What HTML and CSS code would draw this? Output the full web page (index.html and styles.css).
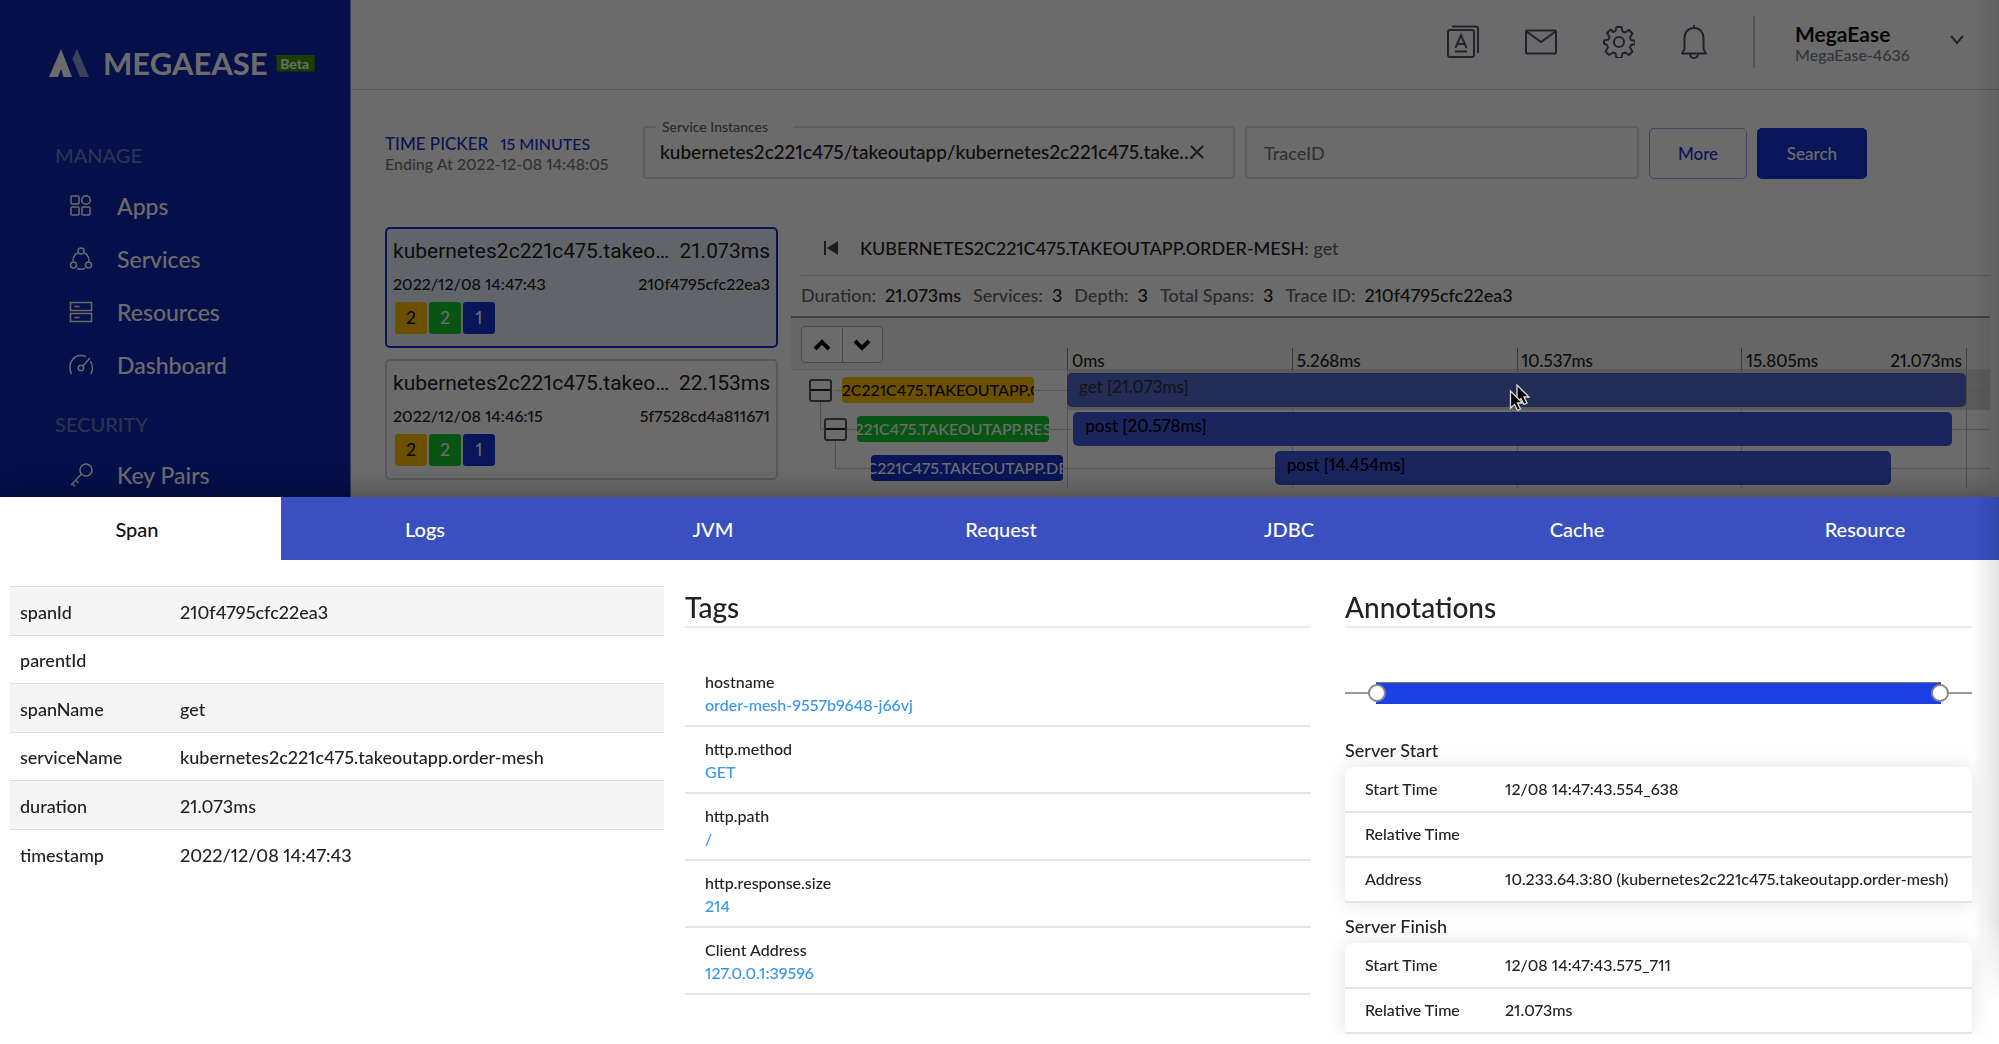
FILE: index.html
```html
<!DOCTYPE html>
<html lang="en">
<head>
<meta charset="utf-8">
<title>MegaEase - Tracing</title>
<link rel="stylesheet" href="styles.css">
</head>
<body>
<div class="app">
  <aside class="sidebar">
    <div class="brand">
      <svg class="brand-mark" width="40" height="28" viewBox="0 0 40 28"><path d="M0 28 12 0 23 28H14.500L12 20 9 28z" fill="#fff"/><path d="M23.500 10 28 0 40 28H31z" fill="#8f9ad6"/></svg>
      <span class="brand-name">MEGAEASE</span>
      <span class="beta">Beta</span>
    </div>
    <nav>
      <h2 class="nav-title">MANAGE</h2>
      <a class="nav-item" href="#apps"><svg class="icon" width="26" height="26" viewBox="0 0 26 26"><rect x="3" y="3" width="8" height="8" rx="1"/><circle cx="18" cy="7" r="4.300"/><rect x="3" y="14" width="8" height="8" rx="1"/><rect x="14" y="14" width="8" height="8" rx="1"/></svg>Apps</a>
      <a class="nav-item" href="#services"><svg class="icon" width="26" height="26" viewBox="0 0 26 26"><circle cx="13" cy="5" r="3"/><circle cx="5.500" cy="19" r="3"/><circle cx="20.500" cy="19" r="3"/><path d="M9.500 7C6.500 8.500 5 11 5 15M16.500 7C19.500 8.500 21 11 21 15M9 22.200c2.500 1.200 5.500 1.200 8 0"/></svg>Services</a>
      <a class="nav-item" href="#resources"><svg class="icon" width="26" height="26" viewBox="0 0 26 26"><rect x="2.500" y="3.500" width="21" height="8"/><rect x="2.500" y="14.500" width="21" height="8"/><path d="M6.500 7.500h5M6.500 18.500h5"/></svg>Resources</a>
      <a class="nav-item" href="#dashboard"><svg class="icon" width="26" height="26" viewBox="0 0 26 26"><path d="M3.500 22C-1 12 5 3.500 13 3.500c2 0 3.500.4 5 1M22.500 9c2.500 4.500 2.500 9 .5 13M15 14l7-8"/><circle cx="13" cy="16" r="2.700"/></svg>Dashboard</a>
      <h2 class="nav-title nav-title-next">SECURITY</h2>
      <a class="nav-item" href="#keys"><svg class="icon" width="26" height="26" viewBox="0 0 26 26"><circle cx="18" cy="8" r="6"/><path d="M13.500 12 3 23M4 21.500l3 3M7.500 18l3 3"/></svg>Key Pairs</a>
    </nav>
  </aside>

  <div class="main">
    <header class="topbar">
      <button class="icon-btn" aria-label="Language"><svg class="icon" width="32" height="34" viewBox="0 0 32 34"><rect x="1" y="5" width="26" height="27" rx="2"/><path d="M5 1.500h24q2 0 2 2V28M8.500 23 14 10l5.500 13M10.500 19h7M8 26.500h12"/></svg></button>
      <button class="icon-btn" aria-label="Messages"><svg class="icon" width="32" height="26" viewBox="0 0 32 26"><rect x="1" y="1.500" width="30" height="23" rx="1"/><path d="M1.500 2.500 16 13 30.500 2.500"/></svg></button>
      <button class="icon-btn" aria-label="Settings"><svg class="icon" width="32" height="32" viewBox="0 0 32 32"><circle cx="16" cy="16" r="5"/><path d="M13.500 1h5l1 4.500 2.500 1 3.900-2.500 3.500 3.500-2.400 4 1 2.500 4.500 1v3l-4.500 1-1 2.500 2.400 4-3.500 3.500-3.900-2.500-2.500 1-1 4.500h-5l-1-4.500-2.500-1-3.900 2.500-3.500-3.500 2.400-4-1-2.500L1 17.500v-3l4.500-1 1-2.500-2.400-4L7.600 3.500 10 6l2.500-1z" stroke-linejoin="round"/></svg></button>
      <button class="icon-btn" aria-label="Notifications"><svg class="icon" width="26" height="34" viewBox="1 0 26 34"><path d="M14 0v3M14 3C8 3 4.500 7.500 4.500 13v11L2 28.500h24L23.500 24V13C23.500 7.500 20 3 14 3zM10 29c.5 5.300 7.500 5.300 8 0" stroke-linejoin="round"/></svg></button>
      <button class="account">
        <span class="account-text"><strong>MegaEase</strong><small>MegaEase-4636</small></span>
        <svg class="icon" width="16" height="12" viewBox="0 0 16 12"><path d="M2 2l6 7 6-7"/></svg>
      </button>
    </header>

    <main class="content">
      <form class="filters" onsubmit="return false">
        <div class="time">
          <button type="button" class="time-btn"><span>TIME PICKER</span><span class="time-range">15 MINUTES</span></button>
          <span class="time-end">Ending At 2022-12-08 14:48:05</span>
        </div>
        <fieldset class="instances">
          <legend><label for="instances">Service Instances</label></legend>
          <div class="instances-row">
            <input id="instances" type="text" value="kubernetes2c221c475/takeoutapp/kubernetes2c221c475.takeoutapp.order-mesh">
            <button type="button" class="clear" aria-label="Clear"><svg width="14" height="14" viewBox="0 0 14 14"><path d="M1 1l12 12M13 1L1 13"/></svg></button>
          </div>
        </fieldset>
        <input class="trace-id" type="text" placeholder="TraceID" aria-label="TraceID">
        <button type="button" class="btn btn-outline">More</button>
        <button type="submit" class="btn btn-solid">Search</button>
      </form>

      <div class="columns">
        <div class="traces">
          <button class="trace trace-active">
            <span class="trace-head"><span class="trace-name">kubernetes2c221c475.takeoutapp.order-mesh</span><span>21.073ms</span></span>
            <span class="trace-meta"><span>2022/12/08 14:47:43</span><span>210f4795cfc22ea3</span></span>
            <span class="badges"><span class="badge yellow">2</span><span class="badge green">2</span><span class="badge blue">1</span></span>
          </button>
          <button class="trace">
            <span class="trace-head"><span class="trace-name">kubernetes2c221c475.takeoutapp.order-mesh</span><span>22.153ms</span></span>
            <span class="trace-meta"><span>2022/12/08 14:46:15</span><span>5f7528cd4a811671</span></span>
            <span class="badges"><span class="badge yellow">2</span><span class="badge green">2</span><span class="badge blue">1</span></span>
          </button>
        </div>

        <section class="detail">
          <div class="detail-title">
            <button class="back" aria-label="Hide list"><svg width="16" height="16" viewBox="0 0 16 16"><path d="M1 1h2v14H1zM15 1v14L4 8z"/></svg></button>
            <h1>KUBERNETES2C221C475.TAKEOUTAPP.ORDER-MESH<span>: get</span></h1>
          </div>
          <dl class="stats">
            <div><dt>Duration:</dt><dd>21.073ms</dd></div>
            <div><dt>Services:</dt><dd>3</dd></div>
            <div><dt>Depth:</dt><dd>3</dd></div>
            <div><dt>Total Spans:</dt><dd>3</dd></div>
            <div><dt>Trace ID:</dt><dd>210f4795cfc22ea3</dd></div>
          </dl>
          <div class="scale">
            <div class="expand">
              <button aria-label="Collapse all"><svg width="18" height="12" viewBox="0 0 18 12"><path d="M2 10l7-7 7 7"/></svg></button>
              <button aria-label="Expand all"><svg width="18" height="12" viewBox="0 0 18 12"><path d="M2 2l7 7 7-7"/></svg></button>
            </div>
            <div class="ticks"><span>0ms</span><span>5.268ms</span><span>10.537ms</span><span class="last"><span>15.805ms</span><span>21.073ms</span></span></div>
          </div>
          <div class="span-row span-hover">
            <div class="tree level-1"><button class="toggle" aria-label="Collapse"></button><span class="service yellow"><span>S2C221C475.TAKEOUTAPP.O</span></span></div>
            <div class="track"><div class="bars"><div class="bar" style="margin-left:0%;width:100%">get [21.073ms]</div></div></div>
          </div>
          <div class="span-row">
            <div class="tree level-2"><button class="toggle" aria-label="Collapse"></button><span class="service green"><span>221C475.TAKEOUTAPP.RES</span></span></div>
            <div class="track"><div class="bars"><div class="bar" style="margin-left:0.7%;width:97.7%">post [20.578ms]</div></div></div>
          </div>
          <div class="span-row">
            <div class="tree level-3"><span class="service blue"><span>C221C475.TAKEOUTAPP.DE</span></span></div>
            <div class="track"><div class="bars"><div class="bar" style="margin-left:23.1%;width:68.6%">post [14.454ms]</div></div></div>
          </div>
        </section>
      </div>
    </main>
  </div>
</div>

<div class="backdrop"></div>
<svg class="pointer" width="22" height="32" viewBox="0 0 22 32"><g fill="#000" stroke="#ddd" stroke-width="1.300"><path d="M8 2v17l4-3.500 3 6 3-1.500-3-6h5z"/><path d="M1.500 8v17l4-3.500 3 6 3-1.500-3-6h5z"/></g></svg>

<section class="drawer" role="dialog" aria-label="Span detail">
  <div class="tabs" role="tablist">
    <button class="tab tab-active" role="tab" aria-selected="true">Span</button>
    <button class="tab" role="tab">Logs</button>
    <button class="tab" role="tab">JVM</button>
    <button class="tab" role="tab">Request</button>
    <button class="tab" role="tab">JDBC</button>
    <button class="tab" role="tab">Cache</button>
    <button class="tab" role="tab">Resource</button>
  </div>
  <div class="drawer-body">
    <table class="props">
      <tbody>
        <tr><th scope="row">spanId</th><td>210f4795cfc22ea3</td></tr>
        <tr><th scope="row">parentId</th><td></td></tr>
        <tr><th scope="row">spanName</th><td>get</td></tr>
        <tr><th scope="row">serviceName</th><td>kubernetes2c221c475.takeoutapp.order-mesh</td></tr>
        <tr><th scope="row">duration</th><td>21.073ms</td></tr>
        <tr><th scope="row">timestamp</th><td>2022/12/08 14:47:43</td></tr>
      </tbody>
    </table>
    <section>
      <h2 class="panel-title">Tags</h2>
      <dl class="tags">
        <div><dt>hostname</dt><dd>order-mesh-9557b9648-j66vj</dd></div>
        <div><dt>http.method</dt><dd>GET</dd></div>
        <div><dt>http.path</dt><dd>/</dd></div>
        <div><dt>http.response.size</dt><dd>214</dd></div>
        <div><dt>Client Address</dt><dd>127.0.0.1:39596</dd></div>
      </dl>
    </section>
    <section class="annotations">
      <h2 class="panel-title">Annotations</h2>
      <div class="range">
        <div class="range-fill"></div>
        <input type="range" aria-label="Start" min="0" max="100" step="any" value="3.7">
        <input type="range" aria-label="Finish" min="0" max="100" step="any" value="96.3">
      </div>
      <h3 class="event-title">Server Start</h3>
      <table class="event">
        <tbody>
          <tr><th scope="row">Start Time</th><td>12/08 14:47:43.554_638</td></tr>
          <tr><th scope="row">Relative Time</th><td></td></tr>
          <tr><th scope="row">Address</th><td>10.233.64.3:80 (kubernetes2c221c475.takeoutapp.order-mesh)</td></tr>
        </tbody>
      </table>
      <h3 class="event-title">Server Finish</h3>
      <table class="event">
        <tbody>
          <tr><th scope="row">Start Time</th><td>12/08 14:47:43.575_711</td></tr>
          <tr><th scope="row">Relative Time</th><td>21.073ms</td></tr>
        </tbody>
      </table>
    </section>
  </div>
</section>
<div class="edge-shade"></div>
</body>
</html>
```
FILE: styles.css
```css
* { box-sizing: border-box; }

body {
  margin: 0;
  height: 100vh;
  overflow: hidden;
  font-family: Lato, "Liberation Sans", sans-serif;
  font-variant-numeric: proportional-nums;
  font-weight: 500;
  font-size: 18px;
  color: #222;
  background: #fff;
}

button, input { font: inherit; font-variant-numeric: inherit; color: inherit; }
button { padding: 0; border: 0; background: none; cursor: pointer; }
h1, h2, h3, dl, dd { margin: 0; }
h1, h2, h3 { font-weight: 500; }

.icon { fill: none; stroke: currentColor; stroke-width: 2; flex: none; }

.app { display: flex; min-height: 100vh; isolation: isolate; }

/* Sidebar */
.sidebar {
  flex: none;
  width: 351px;
  padding: 44px 0 0 49px;
  color: #fff;
  background: #0e24b0;
  border-right: 1px solid #7a85c8;
}
.brand { display: flex; align-items: center; height: 38px; }
.brand-name { margin-left: 14px; font-size: 31px; line-height: 38px; font-weight: 700; }
.beta {
  margin-left: 7px;
  width: 40px;
  font-size: 14px;
  line-height: 17px;
  font-weight: 700;
  text-align: center;
  background: #3a9400;
  clip-path: polygon(0 0, 100% 0, 100% 100%, 5% 100%, 5% 20%);
}
.nav-title { margin: 59px 0 10px 6px; font-size: 20px; line-height: 28px; color: #6a77c4; }
.nav-title.nav-title-next { margin-top: 19px; }
.nav-item {
  display: flex;
  align-items: center;
  gap: 23px;
  height: 53px;
  padding-left: 19px;
  font-size: 23px;
  color: #fff;
  text-decoration: none;
}
.nav-item .icon { stroke-width: 1.5; }

/* Header */
.main { flex: 1; min-width: 0; }
.topbar {
  display: flex;
  align-items: center;
  justify-content: flex-end;
  height: 90px;
  padding: 0 34px 5px 0;
  gap: 46px;
  color: #4a5568;
  border-bottom: 1px solid #d5d5d5;
}
.icon-btn { display: flex; }
.account {
  display: flex;
  align-items: flex-start;
  justify-content: space-between;
  width: 212px;
  height: 52px;
  padding: 6px 0 0 40px;
  text-align: left;
  border-left: 2px solid #ccc;
}
.account .icon { margin-top: 12px; }
.account-text { display: flex; flex-direction: column; }
.account strong { font-size: 21px; line-height: 24px; color: #111; }
.account small { font-size: 16px; line-height: 18px; color: #7a7f8c; }

/* Filters */
.content { padding: 29px 9px 0 34px; }
.filters {
  display: grid;
  grid-template-columns: 248px minmax(0, 592fr) minmax(0, 394fr) 98px 110px;
  column-gap: 10px;
  align-items: start;
  padding-right: 123px;
}
.time { padding-top: 15px; white-space: nowrap; }
.time-btn { display: flex; gap: 12px; color: #1733c9; font-size: 17px; line-height: 20px; }
.time-range { font-size: 16px; }
.time-end { display: block; color: #777; font-size: 16px; line-height: 20px; }
.instances {
  min-width: 0;
  height: 60px;
  margin: 0;
  padding: 0 29px 0 15px;
  border: 2px solid #ddd;
  border-radius: 4px;
}
.instances legend { margin-left: -4px; padding: 0 25px 0 6px; font-size: 14px; line-height: 16px; color: #666; }
.instances-row { display: flex; align-items: center; height: 34px; }
.instances input { flex: 1; min-width: 0; padding: 0; border: 0; outline: 0; background: none; text-overflow: ellipsis; font-size: 19px; line-height: 24px; }
.clear { display: flex; flex: none; margin-left: -8px; }
.clear svg { fill: none; stroke: #444; stroke-width: 2; }
.trace-id {
  min-width: 0;
  width: 100%;
  height: 53px;
  margin-top: 7px;
  padding: 0 17px;
  border: 2px solid #ddd;
  border-radius: 4px;
  background: none;
}
.trace-id::placeholder { color: #777; opacity: 1; }
.btn { height: 51px; margin-top: 9px; border-radius: 5px; font-size: 17px; }
.btn-outline { color: #1733c9; border: 1px solid #98a4e8; }
.btn-solid { color: #fff; background: #1432d2; }

/* Trace list */
.columns { display: grid; grid-template-columns: 393px 1fr; gap: 13px; margin-top: 31px; }
.traces { display: flex; flex-direction: column; gap: 11px; padding-top: 17px; }
.trace {
  display: flex;
  flex-direction: column;
  height: 121px;
  padding: 8px 6px;
  text-align: left;
  border: 2px solid #d2d2d2;
  border-radius: 5px;
}
.trace-active { background: #e8f0fa; border-color: #1432c8; }
.trace-head { display: flex; width: 100%; font-family: Roboto, sans-serif; font-size: 21px; font-weight: 400; line-height: 28px; }
.trace-name { flex: 1; min-width: 0; overflow: hidden; white-space: nowrap; text-overflow: ellipsis; }
.trace-meta { display: flex; justify-content: space-between; width: 100%; margin-top: 9px; font-size: 16px; line-height: 20px; }
.badges { display: flex; gap: 2px; margin: 8px 0 0 2px; }
.badge { width: 32px; line-height: 32px; font-size: 17px; text-align: center; border-radius: 3px; }
.yellow { color: #111; background: #ffbe00; }
.green { color: #fff; background: #14c82c; }
.blue { color: #fff; background: #1432d2; }

/* Trace detail */
.detail { min-width: 0; }
.detail-title {
  display: flex;
  align-items: center;
  gap: 21px;
  height: 66px;
  margin-left: 10px;
  padding: 11px 0 0 22px;
  border-bottom: 1px solid #d5d5d5;
}
.detail h1 { font-size: 18px; line-height: 24px; color: #222; }
.detail h1 span { color: #666; }
.back { display: flex; }
.back svg { fill: #444; }
.stats { display: flex; gap: 12px; height: 40px; padding-left: 10px; font-size: 18px; line-height: 38px; }
.stats div { display: flex; gap: 9px; }
.stats dt { color: #666; }
.scale {
  display: grid;
  grid-template-columns: 276px 1fr;
  height: 54px;
  padding-right: 23px;
  background: #f4f4f4;
  border-top: 2px solid #999;
  border-bottom: 1px solid #ddd;
}
.expand { display: flex; width: 82px; height: 37px; margin: 8px 0 0 10px; border: 1px solid #b0b0b0; border-radius: 4px; background: #fff; }
.expand button { display: flex; align-items: center; justify-content: center; flex: 1; }
.expand button + button { border-left: 1px solid #b0b0b0; }
.expand svg { fill: none; stroke: #111; stroke-width: 4; }
.ticks { display: grid; grid-template-columns: repeat(4, 1fr); align-self: end; height: 21px; font-size: 17px; line-height: 25px; border-right: 1px solid #999; }
.ticks > span { padding: 0 4px; border-left: 1px solid #888; }
.ticks .last { display: flex; justify-content: space-between; }

.span-row { display: grid; grid-template-columns: 276px 1fr; height: 39px; }
.tree { display: flex; align-items: center; gap: 10px; position: relative; }
.level-1 { padding-left: 18px; }
.level-2 { padding-left: 33px; }
.level-3 { padding-left: 80px; }
.tree::before { content: ""; position: absolute; left: 44px; right: 0; top: 50%; border-top: 1px solid #ccc; }
.level-2::before { left: 29px; }
.level-2::after, .level-3::after { content: ""; position: absolute; left: 29px; top: -8px; height: 28px; border-left: 1px solid #bbb; }
.level-3::after { left: 44px; }
.toggle { position: relative; z-index: 1; flex: none; width: 23px; height: 23px; border: 2px solid #555; border-radius: 3px; background: linear-gradient(#222, #222) center / 100% 2px no-repeat #fff; }
.service {
  position: relative;
  z-index: 1;
  display: flex;
  flex: none;
  justify-content: center;
  width: 192px;
  overflow: hidden;
  font-size: 16px;
  line-height: 26px;
  white-space: nowrap;
  border-radius: 4px;
}
.service > span { flex: none; }
.track { padding-right: 23px; background: linear-gradient(#ccc, #ccc) center / 100% 1px no-repeat; }
.bars {
  height: 100%;
  padding: 3px 0;
  border-right: 1px solid #b5b5b5;
  background: repeating-linear-gradient(90deg, #c4c4c4 0 1px, transparent 1px 25%);
}
.bar { height: 34px; padding-left: 12px; font-size: 17px; line-height: 28px; color: #000; background: #3e58e0; border-radius: 5px; }
.span-hover .track { background-color: #dadada; }
.span-hover .bar { background: #5469cf; color: #333; }

/* Overlays */
.backdrop { position: fixed; inset: 0; background: rgba(0, 0, 0, .58); }
.pointer { position: fixed; left: 1509px; top: 383px; }
.edge-shade {
  position: fixed;
  top: 0;
  right: 0;
  bottom: 0;
  width: 26px;
  background: linear-gradient(90deg, transparent, rgba(0, 0, 0, .1));
  mask-image: linear-gradient(#000 88%, transparent 96%);
  pointer-events: none;
}

/* Drawer */
.drawer {
  position: fixed;
  left: 0;
  right: 0;
  bottom: 0;
  height: 52.4vh;
  display: flex;
  flex-direction: column;
  padding-bottom: 10px;
  background: #fefefe;
  box-shadow: 0 -4px 24px rgba(0, 0, 0, .3);
}
.tabs { display: flex; flex: none; height: 63px; margin: 0 -10px 0 -7px; }
.tab { flex: 1; padding-top: 2px; font-size: 20px; line-height: 24px; color: #fff; background: #3a50c0; }
.tab-active { color: #111; background: #fefefe; }
.drawer-body {
  flex: 1;
  min-height: 0;
  overflow: hidden;
  display: grid;
  grid-template-columns: 654fr 626fr 640fr;
  column-gap: 21px;
  align-items: start;
  padding: 26px 27px 0 10px;
}
.drawer-body > * { min-width: 0; }
.annotations { padding-left: 13px; }
table { border-collapse: collapse; table-layout: fixed; width: 100%; }
th { text-align: left; font-weight: 500; }
.props th { width: 160px; }
.props th, .props td { height: 48px; padding: 2px 10px 0; line-height: 22px; border-top: 1px solid #ddd; }
.props tr:nth-child(odd) { background: #f5f5f5; }
.props tr:nth-child(odd) > * { height: 49px; }
.panel-title { height: 42px; font-size: 28px; line-height: 42px; border-bottom: 2px solid #eaeaea; }
.tags { padding-top: 32px; font-size: 16px; line-height: 23px; }
.tags > div { height: 67px; padding: 10px 20px 0; border-bottom: 2px solid #e4e4e4; }
.tags dd { color: #3896f0; }
.range { position: relative; height: 22px; margin-top: 54px; background: linear-gradient(#999, #999) center / 100% 2px no-repeat; }
.range-fill { height: 100%; margin: 0 5%; background: #1c3fe3; border-top: 1px solid #777; }
.range input { position: absolute; left: 0; top: 0; width: 100%; height: 22px; margin: 0; appearance: none; background: none; pointer-events: none; }
.range input::-webkit-slider-thumb { appearance: none; width: 18px; height: 18px; border: 2px solid #888; border-radius: 50%; background: #fff; pointer-events: auto; }
.event-title { height: 34px; margin-top: 29px; font-size: 18px; line-height: 34px; }
.event { border-radius: 8px; box-shadow: 0 0 20px rgba(0, 0, 0, .1); font-size: 16px; line-height: 20px; }
.event + .event-title { margin-top: 6px; }
.event th { width: 150px; }
.event th, .event td { height: 45px; padding: 0 0 0 20px; border-bottom: 2px solid #e4e4e4; white-space: nowrap; }
.event td { padding-left: 10px; }
```
